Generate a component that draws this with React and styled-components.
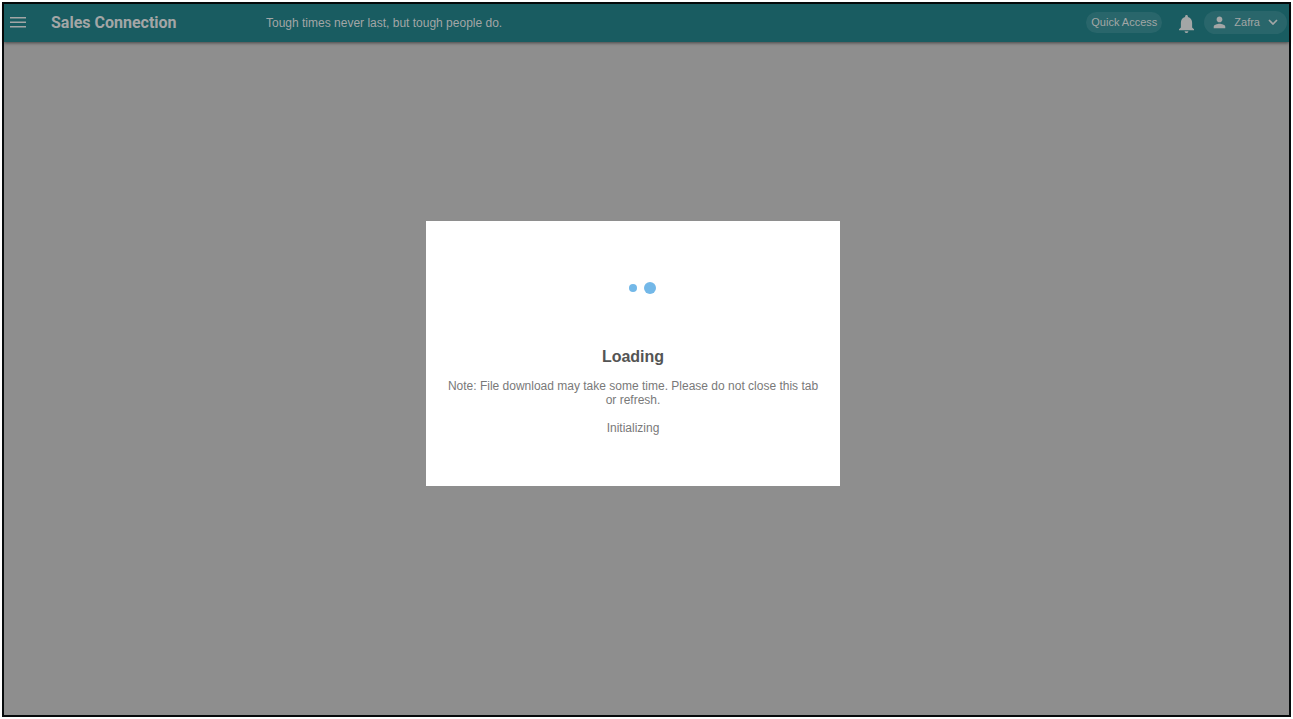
import React from "react";
import styled, { createGlobalStyle } from "styled-components";

const GlobalStyle = createGlobalStyle`
  * { box-sizing: border-box; }
  body { margin: 0; background: #fff; font-family: "Liberation Sans", Arial, sans-serif; }
`;

const Page = styled.div`
  min-height: 100vh;
  padding: 2px;
  display: flex;
`;

const Frame = styled.div`
  position: relative;
  flex: 1;
  display: flex;
  flex-direction: column;
  border: 2px solid #060a0b;
  background: #8e8e8e;
`;

const Header = styled.header`
  display: flex;
  align-items: center;
  height: 38px;
  padding: 0 2px 1px 6px;
  background: #195c61;
  color: #a3a6a6;
  box-shadow: 0 1px 3px rgba(0, 0, 0, 0.5);
`;

const IconButton = styled.button`
  display: flex;
  border: 0;
  padding: 0;
  background: none;
  color: inherit;
`;

const Brand = styled.h1`
  width: 215px;
  margin: 0 0 0 25px;
  font: 700 16px/20px Roboto, sans-serif;
`;

const Quote = styled.p`
  flex: 1;
  margin: 0;
  font-size: 12px;
  line-height: 16px;
`;

const Pill = styled.button`
  display: flex;
  align-items: center;
  justify-content: center;
  gap: 8px;
  height: ${(p) => (p.$tall ? 23 : 21)}px;
  padding: 0 ${(p) => (p.$tall ? 9 : 5)}px 2px;
  border: 0;
  border-radius: 12px;
  background: #29666b;
  color: inherit;
  font: 11px/16px "Liberation Sans", Arial, sans-serif;
`;

const Actions = styled.div`
  display: flex;
  align-items: center;
`;

const Bell = styled(IconButton)`
  margin: 3px 10px 0 17px;
`;

const Overlay = styled.div`
  position: absolute;
  inset: 0;
  display: flex;
  align-items: center;
  justify-content: center;
  padding: 0 27px 12px 0;
`;

const Dialog = styled.section`
  width: 414px;
  padding: 60px 16px 51px;
  background: #fff;
  color: #797979;
  text-align: center;
  font-size: 12px;
  line-height: 14px;
`;

const Dots = styled.div`
  display: flex;
  align-items: center;
  justify-content: center;
  gap: 7px;
  height: 14px;
  padding-left: 19px;
`;

const Dot = styled.span`
  width: ${(p) => p.$size}px;
  height: ${(p) => p.$size}px;
  border-radius: 50%;
  background: #73b8e8;
`;

const Title = styled.h2`
  margin: 52px 0 12px;
  color: #545454;
  font-size: 16px;
  line-height: 20px;
`;

const Text = styled.p`
  margin: 0 0 14px;
  &:last-child { margin: 0; }
`;

export default function App() {
  return (
    <>
      <GlobalStyle />
      <Page>
        <Frame>
          <Header>
            <IconButton aria-label="Menu">
              <svg width="16" height="11" viewBox="0 0 16 11" fill="currentColor">
                <path d="M0 0h16v1.5H0zM0 4.5h16v1.5H0zM0 9h16v1.5H0z" />
              </svg>
            </IconButton>
            <Brand>Sales Connection</Brand>
            <Quote>Tough times never last, but tough people do.</Quote>
            <Actions>
              <Pill>Quick Access</Pill>
              <Bell aria-label="Notifications">
                <svg width="15" height="18" viewBox="4 2.5 16 19.5" preserveAspectRatio="none" fill="currentColor">
                  <path d="M12 22c1.1 0 2-.9 2-2h-4c0 1.1.9 2 2 2zm6-6v-5c0-3.07-1.63-5.64-4.5-6.32V4c0-.83-.67-1.5-1.5-1.5s-1.5.67-1.5 1.5v.68C7.64 5.36 6 7.92 6 11v5l-2 2v1h16v-1l-2-2z" />
                </svg>
              </Bell>
              <Pill $tall>
                <svg width="13" height="14" viewBox="3 2 18 19" fill="currentColor">
                  <path d="M12 12c2.21 0 4-1.79 4-4s-1.79-4-4-4-4 1.79-4 4 1.79 4 4 4zm0 2c-2.67 0-8 1.34-8 4v2h16v-2c0-2.66-5.33-4-8-4z" />
                </svg>
                Zafra
                <svg width="10" height="6" viewBox="0 0 10 6" fill="none" stroke="currentColor" strokeWidth="1.7">
                  <path d="M1 1l4 4 4-4" />
                </svg>
              </Pill>
            </Actions>
          </Header>
          <Overlay>
            <Dialog role="dialog" aria-labelledby="loading-title">
              <Dots>
                <Dot $size={8} />
                <Dot $size={12} />
              </Dots>
              <Title id="loading-title">Loading</Title>
              <Text>Note: File download may take some time. Please do not close this tab or refresh.</Text>
              <Text role="status">Initializing</Text>
            </Dialog>
          </Overlay>
        </Frame>
      </Page>
    </>
  );
}
